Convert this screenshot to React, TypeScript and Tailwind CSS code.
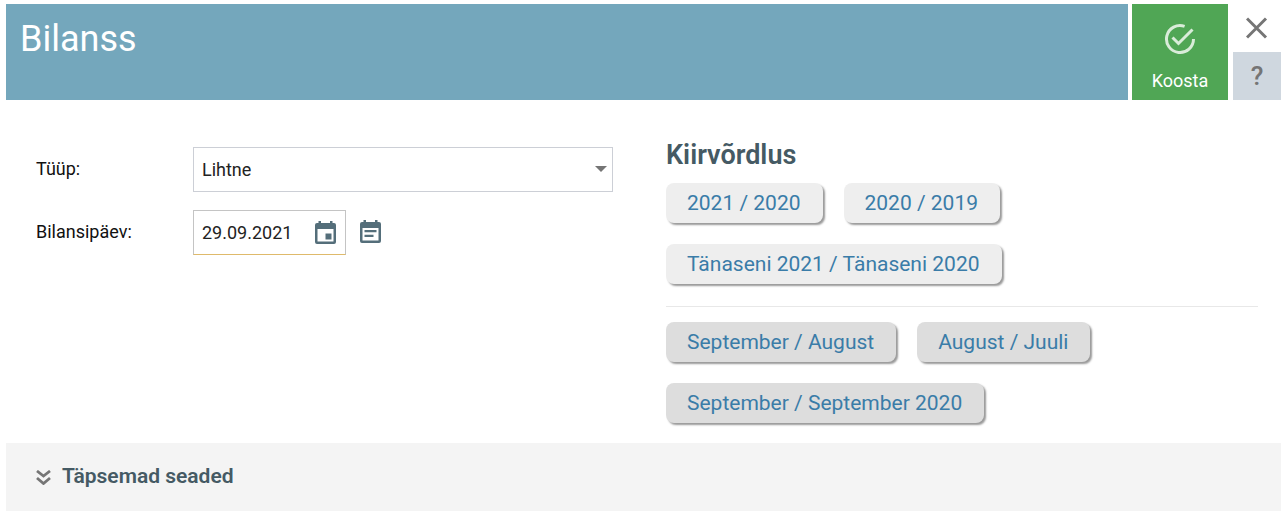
import type { ReactNode } from "react";

const quickYears = ["2021 / 2020", "2020 / 2019", "Tänaseni 2021 / Tänaseni 2020"];
const quickMonths = ["September / August", "August / Juuli", "September / September 2020"];

function QuickButton({ children, tone }: { children: ReactNode; tone: "light" | "dark" }) {
  return (
    <button
      type="button"
      className={`h-10 rounded-lg pr-[22px] pl-[21px] text-[21px] leading-[41px] text-[#3a7ca8] shadow-[2px_2px_2px_#999999] ${
        tone === "light" ? "bg-[#eeeeee]" : "bg-[#dddddd]"
      }`}
    >
      {children}
    </button>
  );
}

function CheckCircle() {
  return (
    <svg width="32" height="32" viewBox="0 0 32 32" fill="none" stroke="#d9ecd9" strokeWidth="3" aria-hidden="true">
      <path d="M20.600 3.300A13.500 13.500 0 1 0 29.500 16" />
      <path d="M8.500 14.500l6 6L28.500 6.500" />
    </svg>
  );
}

function CalendarDay() {
  return (
    <svg width="21" height="24" viewBox="0 0 21 24" fill="#546e7a" aria-hidden="true">
      <path
        fillRule="evenodd"
        d="M3.500 0h2.500v2h9V0h2.500v2h1.500a2 2 0 0 1 2 2v17a2 2 0 0 1-2 2H2a2 2 0 0 1-2-2V4a2 2 0 0 1 2-2h1.500zM2.500 8v12.500h16V8z"
      />
      <path d="M10.500 12.500h6v6h-6z" />
    </svg>
  );
}

function CalendarNote() {
  return (
    <svg width="21" height="24" viewBox="0 0 21 24" fill="#546e7a" aria-hidden="true">
      <path
        fillRule="evenodd"
        d="M3.500 0h2.500v2h9V0h2.500v2h1.500a2 2 0 0 1 2 2v17a2 2 0 0 1-2 2H2a2 2 0 0 1-2-2V4a2 2 0 0 1 2-2h1.500zM2.500 8v12.500h16V8z"
      />
      <path d="M4.500 10h12v2.200h-12zM4.500 14.800h9v2.200h-9z" />
    </svg>
  );
}

export default function App() {
  return (
    <main className="bg-white pt-1 pr-[5px] pb-5 pl-1.5 font-['Roboto',sans-serif] text-black">
      <header className="flex h-24">
        <div className="flex-1 bg-[#74a7bc] px-3.5 pt-3">
          <h1 className="text-[36px] leading-[46px] text-white">Bilanss</h1>
        </div>
        <button
          type="button"
          className="ml-1 flex w-24 flex-col items-center bg-[#50a655] pt-[19px] text-lg leading-6 text-white"
        >
          <CheckCircle />
          <span className="mt-3.5">Koosta</span>
        </button>
        <div className="ml-[5px] flex w-12 flex-col">
          <button type="button" aria-label="Sulge" className="flex h-12 items-center justify-center">
            <svg width="22" height="22" viewBox="0 0 22 22" stroke="#757575" strokeWidth="3" aria-hidden="true">
              <path d="M1 1.500l19 19M20 1.500l-19 19" />
            </svg>
          </button>
          <button
            type="button"
            className="h-12 bg-[#cfd7df] text-[26px] leading-[48px] font-medium text-[#757575]"
          >
            ?
          </button>
        </div>
      </header>

      <div className="flex pt-[35px] pr-[23px] pb-5 pl-[30px]">
        <div className="mr-[53px] flex flex-1 flex-col gap-[18px] pt-3">
          <div className="flex items-center">
            <label htmlFor="type" className="w-[157px] pb-0.5 text-lg text-[#111111]">
              Tüüp:
            </label>
            <div className="relative flex-1">
              <select
                id="type"
                defaultValue="Lihtne"
                className="block h-[45px] w-full appearance-none border border-[#cccfd6] bg-white px-2 text-lg leading-6 text-[#222222]"
              >
                <option>Lihtne</option>
              </select>
              <svg
                width="12"
                height="6"
                viewBox="0 0 12 6"
                fill="#757575"
                className="pointer-events-none absolute top-[19px] right-1.5"
                aria-hidden="true"
              >
                <path d="M0 0h12L6 6z" />
              </svg>
            </div>
          </div>
          <div className="flex items-center">
            <label htmlFor="date" className="w-[157px] pb-0.5 text-lg text-[#111111]">
              Bilansipäev:
            </label>
            <div className="flex h-[45px] w-[153px] items-center border border-[#c4c4c4] border-b-[#dfba6b] pr-[9px] pl-2">
              <input
                id="date"
                type="text"
                defaultValue="29.09.2021"
                className="min-w-0 flex-1 text-lg text-[#222222] outline-none"
              />
              <button type="button" aria-label="Vali kuupäev">
                <CalendarDay />
              </button>
            </div>
            <button type="button" aria-label="Vali periood" className="ml-3.5 pb-0.5">
              <CalendarNote />
            </button>
          </div>
        </div>

        <section className="w-[592px]">
          <h2 className="text-[27px] leading-10 font-semibold text-[#455a64]">Kiirvõrdlus</h2>
          <div className="mt-2 flex flex-wrap gap-[21px] border-b border-[#e8e8e8] pb-[22px]">
            {quickYears.map((label) => (
              <QuickButton key={label} tone="light">
                {label}
              </QuickButton>
            ))}
          </div>
          <div className="mt-[15px] flex flex-wrap gap-[21px]">
            {quickMonths.map((label) => (
              <QuickButton key={label} tone="dark">
                {label}
              </QuickButton>
            ))}
          </div>
        </section>
      </div>

      <button
        type="button"
        className="flex h-[68px] w-full items-center bg-[#f4f4f4] pl-[30px] text-[21px] font-semibold text-[#455a64]"
      >
        <svg
          width="15"
          height="15"
          viewBox="0 0 15 15"
          fill="none"
          stroke="#757575"
          strokeWidth="2.800"
          className="mr-[11px]"
          aria-hidden="true"
        >
          <path d="M1 1l6.500 5L14 1M1 8l6.500 5.500L14 8" />
        </svg>
        Täpsemad seaded
      </button>
    </main>
  );
}
